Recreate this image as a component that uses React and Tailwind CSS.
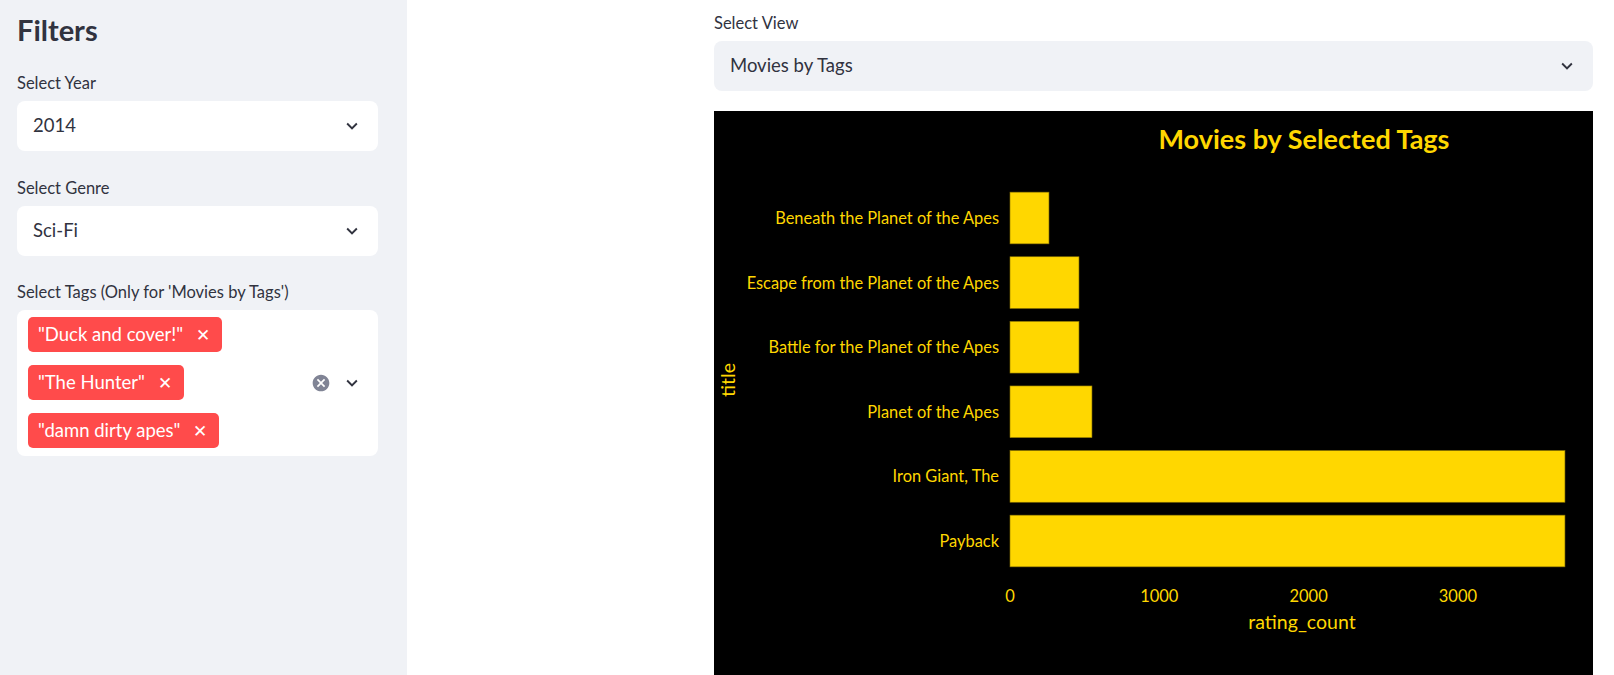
import React from "react";

const font = { fontFamily: "Lato, 'Noto Sans', sans-serif" };

const Chevron = ({ className = "" }) => (
  <svg viewBox="0 0 24 24" width="22" height="22" className={className}>
    <path d="M16.59 8.59L12 13.17 7.41 8.59 6 10l6 6 6-6z" fill="#31333f" />
  </svg>
);

const ClearIcon = () => (
  <svg viewBox="0 0 24 24" width="20" height="20">
    <path
      d="M12 2C6.47 2 2 6.47 2 12s4.47 10 10 10 10-4.47 10-10S17.53 2 12 2zm5 13.59L15.59 17 12 13.41 8.41 17 7 15.59 10.59 12 7 8.41 8.41 7 12 10.59 15.59 7 17 8.41 13.41 12 17 15.59z"
      fill="#808495"
    />
  </svg>
);

const Label = ({ children }) => (
  <div className="text-[16.5px] leading-[20px] text-[#31333f] mb-2">{children}</div>
);

const SelectBox = ({ value, bg = "bg-white" }) => (
  <div className={`${bg} h-[50px] rounded-lg flex items-center justify-between pl-4 pr-[15px]`}>
    <span className="text-[18.5px] text-[#31333f]">{value}</span>
    <Chevron />
  </div>
);

const Tag = ({ text }) => (
  <div className="inline-flex items-center h-[35px] bg-[#ff4b4b] rounded-[5px] pl-[10px] pr-[12px] text-white text-[18.5px]">
    <span>{text}</span>
    <span className="ml-[13px] text-[17px] leading-none">✕</span>
  </div>
);

const movies = [
  { title: "Beneath the Planet of the Apes", count: 261 },
  { title: "Escape from the Planet of the Apes", count: 462 },
  { title: "Battle for the Planet of the Apes", count: 462 },
  { title: "Planet of the Apes", count: 549 },
  { title: "Iron Giant, The", count: 3717 },
  { title: "Payback", count: 3717 },
];

const Chart = () => {
  const x0 = 296;
  const scale = 0.1493;
  const pitch = 64.6;
  const firstCenter = 107;
  const barH = 51.7;
  return (
    <svg width="879" height="580" viewBox="0 0 879 580" style={font}>
      <rect width="879" height="580" fill="#000" />
      <text x="590" y="38" textAnchor="middle" fill="#FFD700" fontSize="27" fontWeight="700">
        Movies by Selected Tags
      </text>
      {movies.map((m, i) => {
        const cy = firstCenter + i * pitch;
        return (
          <g key={m.title}>
            <rect
              x={x0}
              y={cy - barH / 2}
              width={m.count * scale}
              height={barH}
              fill="#FFD700"
              stroke="#8a7400"
              strokeWidth="0.6"
            />
            <text x="285" y={cy + 6} textAnchor="end" fill="#FFD700" fontSize="16.4">
              {m.title}
            </text>
          </g>
        );
      })}
      {[0, 1000, 2000, 3000].map((t) => (
        <text key={t} x={x0 + t * scale} y="491" textAnchor="middle" fill="#FFD700" fontSize="16.5">
          {t}
        </text>
      ))}
      <text x="588" y="518" textAnchor="middle" fill="#FFD700" fontSize="19.5">
        rating_count
      </text>
      <text
        x="0"
        y="0"
        transform="translate(21 269) rotate(-90)"
        textAnchor="middle"
        fill="#FFD700"
        fontSize="19.5"
      >
        title
      </text>
    </svg>
  );
};

export default function App() {
  return (
    <div className="flex h-screen overflow-hidden bg-white" style={font}>
      {/* Sidebar */}
      <aside className="w-[407px] shrink-0 bg-[#f0f2f6] pl-[17px] pr-[29px] pt-[12px]">
        <h2 className="text-[29px] leading-[36px] font-bold text-[#31333f] mb-[25px]">Filters</h2>

        <Label>Select Year</Label>
        <SelectBox value="2014" />

        <div className="mt-[27px]">
          <Label>Select Genre</Label>
          <SelectBox value="Sci-Fi" />
        </div>

        <div className="mt-[26px]">
          <Label>Select Tags (Only for 'Movies by Tags')</Label>
          <div className="bg-white rounded-lg flex items-center pl-[11px] pr-[15px] pt-[7px] pb-[8px]">
            <div className="flex-1 flex flex-col items-start gap-[13px]">
              <Tag text={'"Duck and cover!"'} />
              <Tag text={'"The Hunter"'} />
              <Tag text={'"damn dirty apes"'} />
            </div>
            <div className="flex items-center gap-[10px]">
              <ClearIcon />
              <Chevron />
            </div>
          </div>
        </div>
      </aside>

      {/* Main */}
      <main className="flex-1 pt-[13px]">
        <div className="ml-[307px] w-[879px]">
          <Label>Select View</Label>
          <SelectBox value="Movies by Tags" bg="bg-[#f0f2f6]" />
          <div className="mt-[20px]">
            <Chart />
          </div>
        </div>
      </main>
    </div>
  );
}
